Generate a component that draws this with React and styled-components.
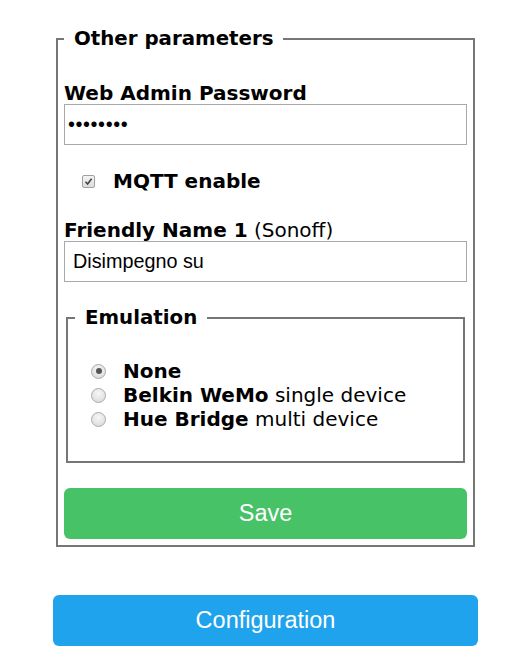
import React from "react";
import styled, { createGlobalStyle } from "styled-components";

const Global = createGlobalStyle`
  html, body { margin: 0; padding: 0; background: #fff; }
  body { font-family: "DejaVu Sans", Verdana, sans-serif; font-size: 20px; color: #000; }
`;

const Page = styled.div`
  width: 425px;
  margin: 0 0 0 53px;
  padding-top: 28px;
  display: flex;
  flex-direction: column;
`;

const Fieldset = styled.fieldset`
  margin: ${(p) => p.$mt || 0}px ${(p) => p.$inset}px 0;
  padding: ${(p) => p.$pad};
  border: 2px solid #767676;
  display: flex;
  flex-direction: column;
  min-width: 0;
`;

const Legend = styled.legend`
  padding: 0 10px;
  margin-left: ${(p) => p.$ml}px;
  font-weight: bold;
  font-size: 19.8px;
  line-height: 22px;
`;

const Label = styled.div`
  font-size: 20px;
  line-height: 22px;
  margin-top: ${(p) => p.$mt}px;
  b { font-weight: bold; }
`;

const Input = styled.div`
  height: 41px;
  box-sizing: border-box;
  border: 1px solid #a9a9a9;
  padding: 0 ${(p) => (p.$dots ? 3 : 8)}px;
  display: flex;
  align-items: center;
  font-family: "Liberation Sans", Arial, sans-serif;
  font-size: 19.8px;
  color: #000;
  letter-spacing: ${(p) => (p.$dots ? "0.6px" : "0")};
`;

const CheckRow = styled.div`
  display: flex;
  align-items: center;
  margin-top: 25px;
  padding-left: 18px;
  gap: 18px;
  font-weight: bold;
  line-height: 22px;
`;

const Box = styled.span`
  width: 13px;
  height: 13px;
  box-sizing: border-box;
  border: 1px solid #a0a0a0;
  border-radius: 2px;
  background: linear-gradient(#f4f4f4, #dcdcdc);
  display: inline-flex;
  align-items: center;
  justify-content: center;
`;

const RadioList = styled.div`
  display: flex;
  flex-direction: column;
  margin-top: 30px;
  padding-left: 23px;
`;

const RadioRow = styled.div`
  display: flex;
  align-items: center;
  gap: 17px;
  line-height: 24px;
`;

const Radio = styled.span`
  width: 15px;
  height: 15px;
  box-sizing: border-box;
  border: 1px solid #ababab;
  border-radius: 50%;
  background: radial-gradient(circle at 50% 35%, #f7f7f7, #d6d6d6);
  display: inline-flex;
  align-items: center;
  justify-content: center;
  &::after {
    content: "";
    width: 6px;
    height: 6px;
    border-radius: 50%;
    background: ${(p) => (p.$on ? "#555" : "transparent")};
  }
`;

const Button = styled.button`
  border: 0;
  border-radius: 6px;
  background: ${(p) => p.$bg};
  color: #fff;
  font-family: "Liberation Sans", Arial, sans-serif;
  font-size: 23.5px;
  height: 51px;
  width: 100%;
  margin-top: ${(p) => p.$mt}px;
  padding: 0;
`;

export default function App() {
  return (
    <>
      <Global />
      <Page>
        <Fieldset $inset={3} $pad="0 6px 6px 6px">
          <Legend $ml={0}>Other parameters</Legend>
          <Label $mt={32}>
            <b>Web Admin Password</b>
          </Label>
          <Input $dots>••••••••</Input>
          <CheckRow>
            <Box>
              <svg width="9" height="9" viewBox="0 0 9 9">
                <path d="M1.5 4.8 L3.6 7 L7.6 1.8" fill="none" stroke="#444" strokeWidth="1.6" />
              </svg>
            </Box>
            MQTT enable
          </CheckRow>
          <Label $mt={27}>
            <b>Friendly Name 1</b> (Sonoff)
          </Label>
          <Input>Disimpegno su</Input>
          <Fieldset $inset={2} $mt={25} $pad="0 0 30px 0">
            <Legend $ml={7}>Emulation</Legend>
            <RadioList>
              <RadioRow>
                <Radio $on />
                <b>None</b>
              </RadioRow>
              <RadioRow>
                <Radio />
                <span>
                  <b>Belkin WeMo</b> single device
                </span>
              </RadioRow>
              <RadioRow>
                <Radio />
                <span>
                  <b>Hue Bridge</b> multi device
                </span>
              </RadioRow>
            </RadioList>
          </Fieldset>
          <Button $bg="#47c266" $mt={25}>Save</Button>
        </Fieldset>
        <Button $bg="#1fa3ec" $mt={48}>Configuration</Button>
      </Page>
    </>
  );
}
